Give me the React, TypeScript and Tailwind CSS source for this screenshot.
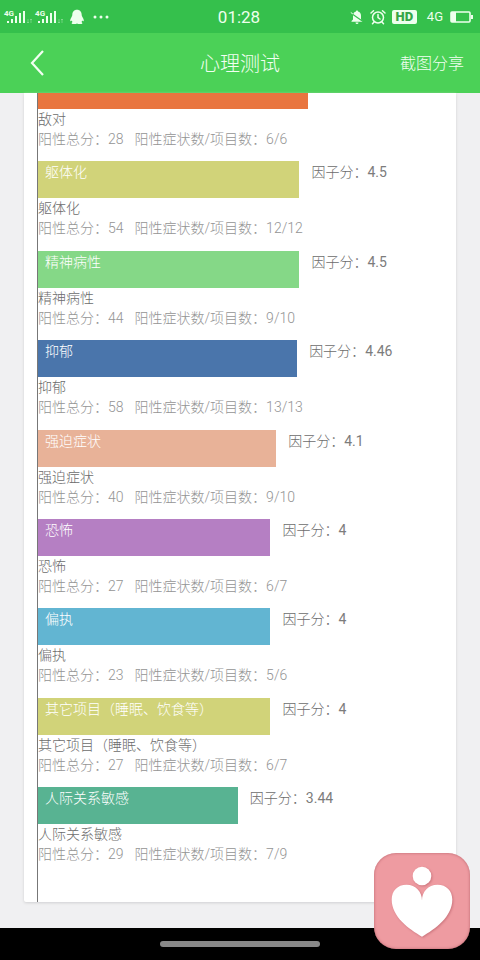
import type { FC } from "react";

type Factor = Readonly<{
  name: string;
  score: number;
  total: number;
  symptoms: string;
  color: string;
}>;

// Share of the plot's width that one factor point takes up.
const PERCENT_PER_POINT = 13.9;

const factors: ReadonlyArray<Factor> = [
  { name: "躯体化", score: 4.5, total: 54, symptoms: "12/12", color: "bg-[#d1d379]" },
  { name: "精神病性", score: 4.5, total: 44, symptoms: "9/10", color: "bg-[#85d887]" },
  { name: "抑郁", score: 4.46, total: 58, symptoms: "13/13", color: "bg-[#4a75ab]" },
  { name: "强迫症状", score: 4.1, total: 40, symptoms: "9/10", color: "bg-[#e8b298]" },
  { name: "恐怖", score: 4, total: 27, symptoms: "6/7", color: "bg-[#b57fc3]" },
  { name: "偏执", score: 4, total: 23, symptoms: "5/6", color: "bg-[#62b5d2]" },
  { name: "其它项目（睡眠、饮食等）", score: 4, total: 27, symptoms: "6/7", color: "bg-[#d1d379]" },
  { name: "人际关系敏感", score: 3.44, total: 29, symptoms: "7/9", color: "bg-[#58b392]" },
];

const Signal: FC = () => (
  <span className="flex items-end">
    <span className="self-start text-[8px] leading-[9px] font-bold -mr-2">4G</span>
    <svg className="w-7 h-4" viewBox="0 0 28 16" fill="currentColor" aria-hidden="true">
      <path d="M1 12h2v2H1zM5 10h2v4H5zM9 7h2v7H9zM13 4h2v10h-2zM17 2h2v12h-2z" />
      <path
        d="M22 10v4m-1-1 1 1 1-1M25 14v-4m-1 1 1-1 1 1"
        stroke="currentColor"
        fill="none"
        opacity=".3"
      />
    </svg>
  </span>
);

const StatusBar: FC = () => (
  <div className="grid grid-cols-[1fr_auto_1fr] items-center h-[33px] pl-1 pr-[6px] bg-[#35c04c] text-[#edffed]">
    <div className="flex items-center">
      <span className="flex gap-px">
        <Signal />
        <Signal />
      </span>
      <svg className="w-4 h-4 ml-1" viewBox="0 0 16 16" fill="currentColor" aria-hidden="true">
        <path d="M8 .8C5 .8 3.300 3 3.300 5.700c0 1-.4 1.600-1 2.700C1.500 9.700 1 11 1.300 12c.3.600 1-.1 1.500-.6.1.6.400 1.200.9 1.700-.8.400-1.200.8-1 1.400.3.800 4.200.7 5.300 0 1.100.7 5 .8 5.300 0 .2-.6-.2-1-1-1.400.5-.5.8-1.100.9-1.700.5.500 1.200 1.200 1.500.6.300-1-.2-2.300-1-3.600-.6-1.100-1-1.700-1-2.700C12.700 3 11 .8 8 .8z" />
      </svg>
      <svg className="w-4 h-4 ml-2" viewBox="0 0 16 16" fill="currentColor" aria-hidden="true">
        <circle cx="2" cy="8" r="1.500" />
        <circle cx="8" cy="8" r="1.500" />
        <circle cx="14" cy="8" r="1.500" />
      </svg>
    </div>
    <time className="text-[17px] leading-6">01:28</time>
    <div className="flex items-center justify-end">
      <svg className="w-[14px] h-4" viewBox="0 0 14 16" aria-hidden="true">
        <path
          d="M7 1.500c-.7 0-1 .4-1 1C4 3 3 4.700 3 6.800v3.700L1.500 12v.8h11V12L11 10.500V6.800C11 4.700 10 3 8 2.500c0-.6-.3-1-1-1zM5.500 13.500a1.500 1.500 0 0 0 3 0z"
          fill="currentColor"
        />
        <path d="m1.500 4.500 11.500 8" stroke="#35c04c" strokeWidth="1.200" />
        <path d="m.8 3.500 2 1.400" stroke="currentColor" />
      </svg>
      <svg
        className="w-4 h-4 ml-[6px]"
        viewBox="0 0 16 16"
        fill="none"
        stroke="currentColor"
        strokeWidth="1.500"
        strokeLinecap="round"
        aria-hidden="true"
      >
        <circle cx="8" cy="8.500" r="5.500" />
        <path d="M8 5.500v3l2 1.500M1 4l2.500-2.300M15 4l-2.500-2.300M4 13l-1.500 1.700M12 13l1.500 1.700" />
      </svg>
      <span className="flex items-center justify-center w-[25px] h-[14px] ml-[6px] rounded-xs bg-[#edffed] text-[13px] leading-[14px] font-black text-[#35a548]">
        HD
      </span>
      <span className="ml-[10px] text-[13px] leading-4">4G</span>
      <svg className="w-6 h-3 ml-[7px]" viewBox="0 0 24 12" aria-hidden="true">
        <rect x="1" y="1" width="19" height="10" rx="1" fill="none" stroke="currentColor" strokeWidth="1.600" />
        <path d="M1 1h5v10H1zM21 4h2v4h-2z" fill="currentColor" />
      </svg>
    </div>
  </div>
);

const TitleBar: FC = () => (
  <header className="grid grid-cols-[1fr_auto_1fr] items-center h-[60px] px-4 bg-[#4bd157] text-[#f2fff2]">
    <button type="button" aria-label="返回" className="justify-self-start pl-3 py-2">
      <svg
        className="w-5 h-7"
        viewBox="0 0 20 28"
        fill="none"
        stroke="currentColor"
        strokeWidth="2.200"
        aria-hidden="true"
      >
        <path d="M15 2 4 14l11 12" />
      </svg>
    </button>
    <h1 className="pt-[2px] text-[20px] leading-7 font-light">心理测试</h1>
    <button type="button" className="justify-self-end pt-[2px] text-[16px] leading-6 font-light">
      截图分享
    </button>
  </header>
);

type SummaryProps = Readonly<{ name: string; total: number; symptoms: string }>;

const Summary: FC<SummaryProps> = ({ name, total, symptoms }) => (
  <>
    <h2 className="text-[#6c6c6c] font-light">{name}</h2>
    <p className="flex gap-[11px] text-[#949494] font-light">
      <span>阳性总分：{total}</span>
      <span>阳性症状数/项目数：{symptoms}</span>
    </p>
  </>
);

const FactorRow: FC<Factor> = ({ name, score, total, symptoms, color }) => (
  <li>
    <div className="flex h-[37px] leading-[22px] whitespace-nowrap">
      <div
        className={`shrink-0 pl-[7px] text-white font-light ${color}`}
        style={{ width: `${score * PERCENT_PER_POINT}%` }}
      >
        {name}
      </div>
      <span className="pl-3 text-[#7c7c7c]">
        <span className="font-light text-[#6c6c6c]">因子分：</span>
        {score}
      </span>
    </div>
    <Summary name={name} total={total} symptoms={symptoms} />
  </li>
);

const HeartButton: FC = () => (
  <button
    type="button"
    aria-label="心理咨询"
    className="fixed right-[10px] bottom-[11px] size-24 rounded-[22px] bg-[#ee9ba1] shadow-[inset_0_0_3px_#b8646c]"
  >
    <svg className="size-full drop-shadow-[1px_1px_1px_#cc757d]" viewBox="0 0 96 96" fill="#fff" aria-hidden="true">
      <circle cx="48" cy="23" r="9.300" />
      <path d="M48 47.500C48 39 42 31.800 32.500 31.800 23.500 31.800 17.700 38 17.700 46.500 17.700 64 35 76 48 83.700 61 76 78.300 64 78.300 46.500 78.300 38 72.500 31.800 63.500 31.800 54 31.800 48 39 48 47.500z" />
    </svg>
  </button>
);

const App: FC = () => (
  <div className="flex flex-col min-h-screen bg-[#f0f0f2] font-['Roboto','Noto_Sans_CJK_SC',sans-serif]">
    <StatusBar />
    <TitleBar />
    <main className="flex flex-col grow mx-6 mb-[26px] pl-[13px] bg-white rounded-b-xs shadow-[0_1px_3px_#d0d0d2]">
      <ul className="flex flex-col justify-between grow pb-[38px] border-l border-[#777] text-[14px] leading-5">
        <li>
          <div className="w-[64.500%] h-4 bg-[#e9753f]" />
          <Summary name="敌对" total={28} symptoms="6/6" />
        </li>
        {factors.map((factor) => (
          <FactorRow key={factor.name} {...factor} />
        ))}
      </ul>
    </main>
    <footer className="flex items-center justify-center h-8 bg-black">
      <div className="w-1/3 h-[6px] rounded-full bg-[#888]" />
    </footer>
    <HeartButton />
  </div>
);

export default App;
